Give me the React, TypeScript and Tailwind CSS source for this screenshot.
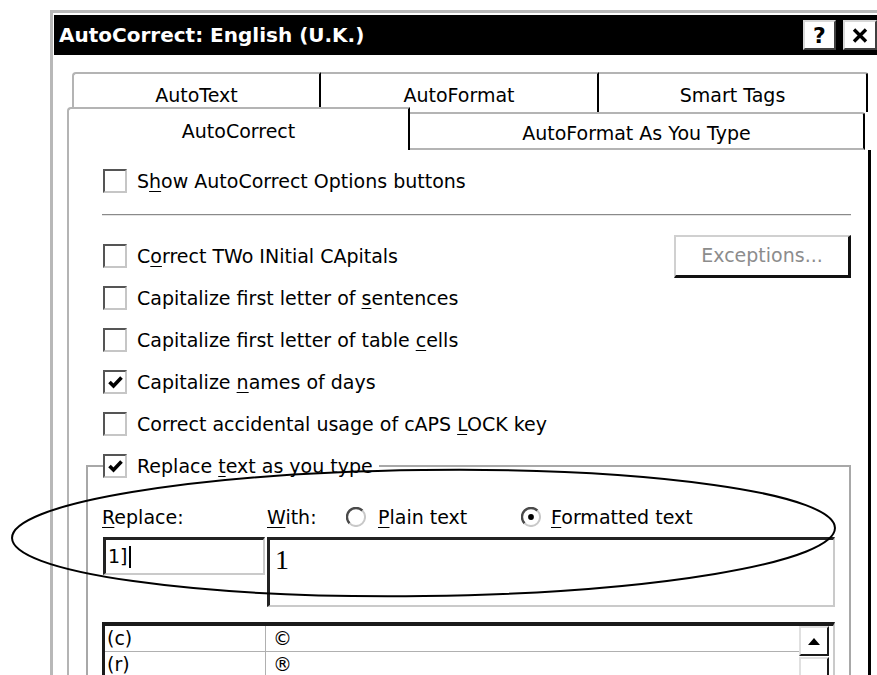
import type { ReactNode } from "react";

function U({ children }: { children: ReactNode }) {
  return <span className="underline decoration-1 underline-offset-[3px]">{children}</span>;
}

function Box({ checked = false }: { checked?: boolean }) {
  return (
    <span className="flex h-[24px] w-[24px] shrink-0 items-center justify-center border-2 border-r-[#c6c6c6] border-b-[#c6c6c6] border-t-[#555] border-l-[#555] bg-white">
      {checked && (
        <svg width="17" height="17" viewBox="0 0 17 17">
          <path d="M2.5 8 L6.5 12 L14.5 3.5" fill="none" stroke="black" strokeWidth="3.6" />
        </svg>
      )}
    </span>
  );
}

function Radio({ checked = false }: { checked?: boolean }) {
  return (
    <svg width="20" height="20" viewBox="0 0 20 20" className="shrink-0">
      <path d="M16.4 3.6 A9 9 0 0 0 3.6 16.4" stroke="#4a4a4a" strokeWidth="2.4" fill="none" />
      <path d="M3.6 16.4 A9 9 0 0 0 16.4 3.6" stroke="#c8c8c8" strokeWidth="2" fill="none" />
      {checked && <circle cx="10" cy="10" r="2.9" fill="black" />}
    </svg>
  );
}

function Option({ checked, children }: { checked?: boolean; children: ReactNode }) {
  return (
    <div className="flex h-[42px] items-center gap-[10px]">
      <Box checked={checked} />
      <span>{children}</span>
    </div>
  );
}

const rows = [
  { key: "sentences", checked: false, label: <>Capitalize first letter of <U>s</U>entences</> },
  { key: "cells", checked: false, label: <>Capitalize first letter of table <U>c</U>ells</> },
  { key: "days", checked: true, label: <>Capitalize <U>n</U>ames of days</> },
  { key: "caps", checked: false, label: <>Correct accidental usage of cAPS <U>L</U>OCK key</> },
];

const entries = [
  { from: "(c)", to: "©" },
  { from: "(r)", to: "®" },
];

export default function App() {
  return (
    <div className="relative h-[675px] w-[877px] overflow-hidden bg-white font-['DejaVu_Sans',sans-serif] text-[19px] leading-none text-black">
      <div className="ml-[50px] mt-[10px] w-[834px] border-x-[3px] border-t-[3px] border-[#b8b8b8] pl-[1px] pr-[2px] pt-[2px]">
        {/* title bar */}
        <div className="flex h-[40px] items-center bg-black pl-[5px] pr-[2px]">
          <span className="text-[20px] font-bold text-white">AutoCorrect: English (U.K.)</span>
          <div className="ml-auto flex gap-[7px]">
            <div className="flex h-[30px] w-[33px] items-center justify-center border-2 border-r-[#404040] border-b-[#404040] border-t-[#d8d8d8] border-l-[#d8d8d8] bg-white pt-[1px] text-[22px] font-bold">
              ?
            </div>
            <div className="flex h-[30px] w-[34px] items-center justify-center border-2 border-r-[#404040] border-b-[#404040] border-t-[#d8d8d8] border-l-[#d8d8d8] bg-white">
              <svg width="16" height="15" viewBox="0 0 16 15">
                <path d="M2 1.5 L14 13.5 M14 1.5 L2 13.5" stroke="black" strokeWidth="3.4" />
              </svg>
            </div>
          </div>
        </div>

        {/* body */}
        <div className="h-[620px] pl-[13px] pt-[17px]">
          {/* back tab row */}
          <div className="ml-[5px] flex h-[40px]">
            <div className="flex h-[40px] w-[249px] items-center justify-center rounded-tl-[4px] border-t-2 border-l-2 border-r-2 border-t-[#b4b4b4] border-l-[#b4b4b4] border-r-black pt-[4px]">
              AutoText
            </div>
            <div className="flex h-[40px] w-[278px] items-center justify-center border-t-2 border-r-2 border-t-[#b4b4b4] border-r-black pt-[4px]">
              AutoFormat
            </div>
            <div className="flex h-[40px] w-[269px] items-center justify-center rounded-tr-[3px] border-t-2 border-r-2 border-t-[#b4b4b4] border-r-black pt-[4px]">
              Smart Tags
            </div>
          </div>

          {/* front tab row */}
          <div className="relative -mt-[5px] flex h-[43px] items-end">
            <div className="flex h-[43px] w-[343px] items-center justify-center rounded-tl-[4px] border-t-2 border-l-2 border-r-2 border-t-[#b4b4b4] border-l-[#b4b4b4] border-r-black bg-white pt-[4px]">
              AutoCorrect
            </div>
            <div className="flex h-[38px] w-[455px] items-center justify-center rounded-tr-[3px] border-t-2 border-r-2 border-b-2 border-t-[#b4b4b4] border-b-[#b4b4b4] border-r-black bg-white pt-[4px]">
              AutoFormat As You Type
            </div>
          </div>

          {/* panel */}
          <div className="h-[540px] w-[804px] border-l-2 border-r-[3px] border-l-[#b4b4b4] border-r-black pl-[34px]">
            <div className="pt-[19px]">
              <div className="flex h-[24px] items-center gap-[10px]">
                <Box />
                <span>
                  S<U>h</U>ow AutoCorrect Options buttons
                </span>
              </div>
            </div>

            <div className="-ml-[1px] mt-[21px] h-[2px] w-[749px] border-t border-b border-t-[#8a8a8a] border-b-[#e4e4e4]" />

            <div className="mt-[19px] w-[748px]">
              <div className="flex h-[42px] items-center justify-between">
                <div className="flex items-center gap-[10px]">
                  <Box />
                  <span>
                    C<U>o</U>rrect TWo INitial CApitals
                  </span>
                </div>
                <div className="flex h-[43px] w-[177px] items-center justify-center border-t-2 border-l-2 border-r-[3px] border-b-[3px] border-r-[#111] border-b-[#111] border-t-[#d0d0d0] border-l-[#d0d0d0] text-[#8c8c8c]">
                  Exceptions...
                </div>
              </div>
              {rows.map((r) => (
                <Option key={r.key} checked={r.checked}>
                  {r.label}
                </Option>
              ))}
            </div>

            {/* replace group */}
            <fieldset className="-ml-[17px] mt-[9px] h-[260px] w-[765px] border-2 border-[#a8a8a8] px-[14px]">
              <legend className="ml-[1px] pr-[6px]">
                <div className="flex h-[24px] items-center gap-[10px] bg-white">
                  <Box checked />
                  <span>
                    Replace <U>t</U>ext as you type
                  </span>
                </div>
              </legend>

              <div className="mt-[27px] flex h-[24px] items-center">
                <span className="w-[165px]">
                  <U>R</U>eplace:
                </span>
                <span className="w-[79px]">
                  <U>W</U>ith:
                </span>
                <div className="flex w-[175px] items-center gap-[12px]">
                  <Radio />
                  <span>
                    <U>P</U>lain text
                  </span>
                </div>
                <div className="flex items-center gap-[10px]">
                  <Radio checked />
                  <span>
                    <U>F</U>ormatted text
                  </span>
                </div>
              </div>

              <div className="mt-[8px] flex items-start">
                <div className="ml-[1px] flex h-[38px] w-[162px] items-center border-t-[3px] border-l-[3px] border-r-2 border-b-2 border-t-[#222] border-l-[#222] border-r-[#cacaca] border-b-[#cacaca] pl-[2px]">
                  <span>1]</span>
                  <span className="ml-[1px] h-[22px] w-[2px] bg-black" />
                </div>
                <div className="ml-[2px] h-[70px] w-[568px] border-t-[3px] border-l-[3px] border-r-2 border-b-2 border-t-[#222] border-l-[#222] border-r-[#cacaca] border-b-[#cacaca] pl-[5px] pt-[6px] font-['Liberation_Serif',serif] text-[28px] leading-none">
                  1
                </div>
              </div>

              <div className="mt-[15px] flex h-[80px] w-[733px] border-t-[4px] border-l-[3px] border-r-2 border-t-[#1a1a1a] border-l-[#1a1a1a] border-r-[#cacaca] pr-[4px]">
                <div className="flex-1">
                  {entries.map((e) => (
                    <div key={e.from} className="flex h-[26px] border-b border-[#b0b0b0]">
                      <div className="flex w-[161px] items-center border-r border-[#b0b0b0] pl-[2px]">{e.from}</div>
                      <div className="flex items-center pl-[7px]">{e.to}</div>
                    </div>
                  ))}
                </div>
                <div className="w-[30px]">
                  <div className="flex h-[30px] items-center justify-center border-2 border-r-[#1a1a1a] border-b-[#1a1a1a] border-t-[#e0e0e0] border-l-[#e0e0e0]">
                    <svg width="12" height="7" viewBox="0 0 12 7">
                      <path d="M0 7 L6 0 L12 7 Z" fill="black" />
                    </svg>
                  </div>
                  <div className="mt-[1px] h-[40px] border-2 border-r-[#1a1a1a] border-b-[#1a1a1a] border-t-[#e0e0e0] border-l-[#e0e0e0]" />
                </div>
              </div>
            </fieldset>
          </div>
        </div>
      </div>

      {/* hand-drawn annotation ellipse */}
      <svg className="pointer-events-none absolute left-0 top-0" width="877" height="675">
        <ellipse
          cx="423.5"
          cy="533"
          rx="411.5"
          ry="63"
          transform="rotate(-0.7 423.5 533)"
          fill="none"
          stroke="black"
          strokeWidth="2"
        />
      </svg>
    </div>
  );
}
